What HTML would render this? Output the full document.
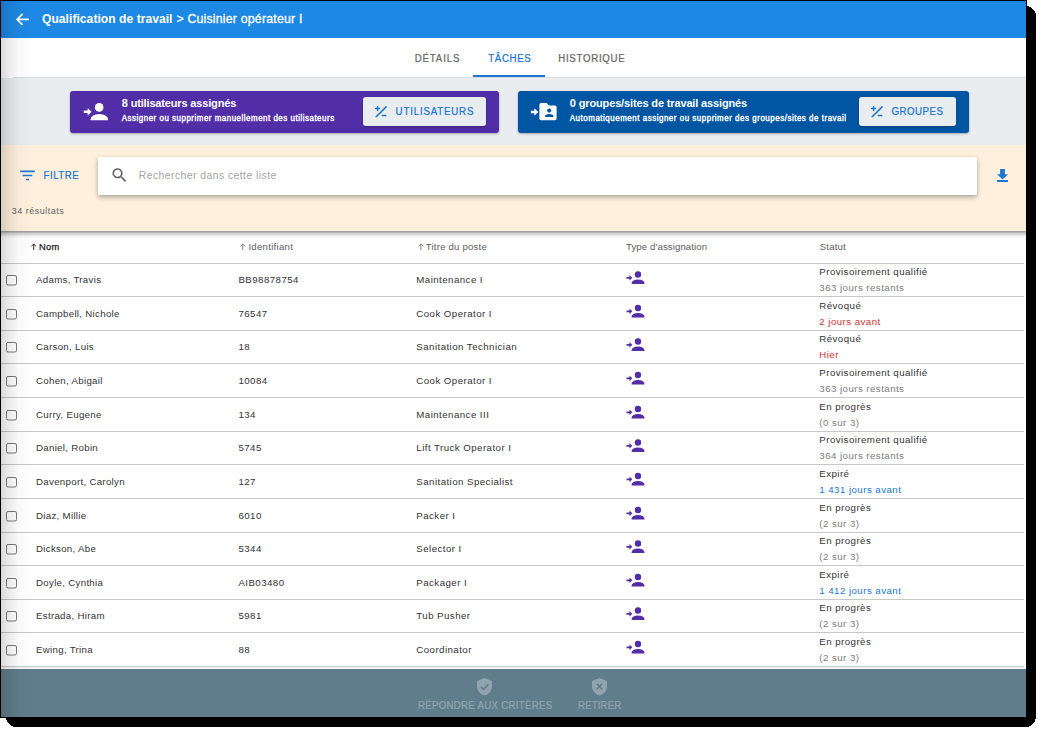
<!DOCTYPE html>
<html><head><meta charset="utf-8">
<style>
*{margin:0;padding:0}
html,body{width:1042px;height:733px;overflow:hidden;background:#fff}
svg{display:block;font-family:"Liberation Sans",sans-serif}
</style></head><body>
<svg width="1042" height="733" viewBox="0 0 1042 733">
<defs>
<clipPath id="win"><rect x="1" y="1" width="1025" height="716"/></clipPath>
<linearGradient id="lshadow" x1="0" x2="1" y1="0" y2="0">
 <stop offset="0" stop-color="#000" stop-opacity="0.15"/>
 <stop offset="0.25" stop-color="#000" stop-opacity="0.08"/>
 <stop offset="0.55" stop-color="#000" stop-opacity="0.025"/>
 <stop offset="1" stop-color="#000" stop-opacity="0"/>
</linearGradient>
<linearGradient id="bshadow" x1="0" x2="0" y1="0" y2="1">
 <stop offset="0" stop-color="#000" stop-opacity="0.42"/>
 <stop offset="0.3" stop-color="#000" stop-opacity="0.2"/>
 <stop offset="0.65" stop-color="#000" stop-opacity="0.05"/>
 <stop offset="1" stop-color="#000" stop-opacity="0"/>
</linearGradient>
<filter id="elev" x="-10%" y="-30%" width="120%" height="170%">
 <feDropShadow dx="0" dy="1" stdDeviation="0.8" flood-color="#000" flood-opacity="0.3"/>
</filter>
<filter id="elev2" x="-10%" y="-30%" width="120%" height="170%">
 <feDropShadow dx="0" dy="2" stdDeviation="2.6" flood-color="#000" flood-opacity="0.34"/>
</filter>
</defs>
<rect x="6" y="6" width="1030" height="721" rx="10" fill="#000" shape-rendering="crispEdges"/>
<rect x="0" y="0" width="1027" height="718" fill="#000"/>
<g clip-path="url(#win)">
<rect x="1" y="1" width="1025" height="37" fill="#1e88e5"/>
<rect x="1" y="38" width="1025" height="39" fill="#fff"/>
<rect x="1" y="77" width="12" height="1" fill="#fff"/><rect x="13" y="77" width="1013" height="1" fill="#dcdcdc"/>
<rect x="1" y="78" width="1025" height="67" fill="#e9edf0"/>
<rect x="1" y="145" width="1025" height="86" fill="#fef0dd"/>
<rect x="1" y="231" width="1025" height="437" fill="#fff"/>
<rect x="1" y="231" width="1025" height="8" fill="url(#bshadow)"/>
<rect x="1" y="669" width="1025" height="48" fill="#607d8b"/>
<rect x="1" y="667" width="1025" height="2" fill="#f5f4f2"/>
<path d="M28.8 19.4H17.2M22.6 13.9L17.1 19.4L22.6 24.9" stroke="#fff" stroke-width="1.6" fill="none"/>
<g transform="translate(42,23) scale(0.93,1)">
<text x="0" y="0" font-size="13" fill="#fff" font-weight="bold" textLength="140.32" lengthAdjust="spacing" >Qualification de travail</text>
</g>
<g transform="translate(176.4,23) scale(0.95,1)">
<text x="0" y="0" font-size="13" fill="#fff" textLength="132.63" lengthAdjust="spacing" stroke="#fff" stroke-width="0.3" >&gt; Cuisinier opérateur I</text>
</g>
<g transform="translate(414.7,61.8) scale(0.88,1)">
<text x="0" y="0" font-size="11" fill="#666" textLength="50.8" lengthAdjust="spacing" stroke="#666" stroke-width="0.25" >DÉTAILS</text>
</g>
<g transform="translate(488.3,61.8) scale(0.88,1)">
<text x="0" y="0" font-size="11" fill="#1976d2" textLength="48.18" lengthAdjust="spacing" stroke="#1976d2" stroke-width="0.25" >TÂCHES</text>
</g>
<g transform="translate(558.2,61.8) scale(0.88,1)">
<text x="0" y="0" font-size="11" fill="#666" textLength="75.68" lengthAdjust="spacing" stroke="#666" stroke-width="0.25" >HISTORIQUE</text>
</g>
<rect x="473" y="75" width="72" height="2" fill="#1976d2"/>
<rect x="70" y="91" width="429" height="42" rx="3" fill="#512da8" filter="url(#elev)"/>
<g transform="translate(83.7,103) scale(1)" fill="#fff"><circle cx="15.5" cy="4.4" r="4.3"/><path d="M6.9 17.2V16.2A8.7 5.2 0 0 1 24.3 16.2V17.2z"/><path d="M0 7.55h4V4.9l3.8 3.9-3.8 3.9V10.05H0z"/></g>
<text x="121.8" y="106.5" font-size="11" fill="#fff" font-weight="bold" textLength="114.5" lengthAdjust="spacing" >8 utilisateurs assignés</text>
<g transform="translate(121.8,121) scale(0.88,1)">
<text x="0" y="0" font-size="9" fill="#fff" textLength="241.25" lengthAdjust="spacing" stroke="#fff" stroke-width="0.4" >Assigner ou supprimer manuellement des utilisateurs</text>
</g>
<rect x="363" y="97" width="123" height="29" rx="3" fill="#e9edf0" filter="url(#elev)"/>
<g transform="translate(372.5,105.6)" stroke="#1976d2" stroke-width="1.5" stroke-linecap="round" fill="none"><path d="M3.2 3h3.8M5.1 1.2v3.6M3.7 11.1L13.6 1.3M9.9 9.9h3.3"/></g>
<g transform="translate(395.6,114.9) scale(0.88,1)">
<text x="0" y="0" font-size="11" fill="#1976d2" textLength="88.41" lengthAdjust="spacing" stroke="#1976d2" stroke-width="0.25" >UTILISATEURS</text>
</g>
<rect x="518" y="91" width="451" height="42" rx="3" fill="#0156a2" filter="url(#elev)"/>
<g fill="#fff"><path d="M530.9 110.8h3.4v-2.5l4 3.7-4 3.7v-2.5h-3.4z"/><path d="M541 103.1h5.8l2 2.3h6.2a1.6 1.6 0 0 1 1.6 1.6v11.6a1.6 1.6 0 0 1-1.6 1.6h-14a1.6 1.6 0 0 1-1.6-1.6v-13.9a1.6 1.6 0 0 1 1.6-1.6z"/></g>
<circle cx="549.2" cy="110.6" r="2.1" fill="#0156a2"/>
<path d="M545 117v-1c0-1.2 2-2 4.2-2s4.2.8 4.2 2v1z" fill="#0156a2"/>
<text x="569.8" y="106.5" font-size="11" fill="#fff" font-weight="bold" textLength="177.4" lengthAdjust="spacing" >0 groupes/sites de travail assignés</text>
<g transform="translate(569.8,121) scale(0.88,1)">
<text x="0" y="0" font-size="9" fill="#fff" textLength="313.98" lengthAdjust="spacing" stroke="#fff" stroke-width="0.4" >Automatiquement assigner ou supprimer des groupes/sites de travail</text>
</g>
<rect x="859" y="97" width="97" height="29" rx="3" fill="#e9edf0" filter="url(#elev)"/>
<g transform="translate(868.5,105.6)" stroke="#1976d2" stroke-width="1.5" stroke-linecap="round" fill="none"><path d="M3.2 3h3.8M5.1 1.2v3.6M3.7 11.1L13.6 1.3M9.9 9.9h3.3"/></g>
<g transform="translate(891.4,114.9) scale(0.88,1)">
<text x="0" y="0" font-size="11" fill="#1976d2" textLength="58.52" lengthAdjust="spacing" stroke="#1976d2" stroke-width="0.25" >GROUPES</text>
</g>
<g transform="translate(17.77,165.73) scale(0.81)" fill="#1976d2"><path d="M10 18h4v-2h-4v2zM3 6v2h18V6H3zm3 7h12v-2H6v2z"/></g>
<g transform="translate(43.5,178.8) scale(0.88,1)">
<text x="0" y="0" font-size="11" fill="#1976d2" textLength="40.11" lengthAdjust="spacing" stroke="#1976d2" stroke-width="0.25" >FILTRE</text>
</g>
<rect x="98" y="157" width="879" height="38" rx="2" fill="#fff" filter="url(#elev2)"/>
<g transform="translate(110.1,165.8) scale(0.785)" fill="#666"><path d="M15.5 14h-.79l-.28-.27C15.41 12.59 16 11.11 16 9.5 16 5.91 13.09 3 9.5 3S3 5.91 3 9.5 5.91 16 9.5 16c1.61 0 3.09-.59 4.23-1.57l.27.28v.79l5 4.99L20.49 19l-4.99-5zm-6 0C7.01 14 5 11.99 5 9.5S7.01 5 9.5 5 14 7.01 14 9.5 11.99 14 9.5 14z"/></g>
<g transform="translate(138.8,178.8) scale(0.9,1)">
<text x="0" y="0" font-size="11.5" fill="#a3a3a3" textLength="152.78" lengthAdjust="spacing" >Rechercher dans cette liste</text>
</g>
<path d="M1000.1 169h4.8v5.2h3.1l-5.45 5.4-5.45-5.4h3z M997.1 180.1h10.9v1.9h-10.9z" fill="#1976d2"/>
<text x="11.7" y="213.7" font-size="9" fill="#666" textLength="52" lengthAdjust="spacing" >34 résultats</text>
<text x="39" y="249.8" font-size="9.3" fill="#222" textLength="20.3" lengthAdjust="spacing" stroke="#222" stroke-width="0.25" >Nom</text>
<path d="M33.7 250V244M31.3 246.4L33.7 244L36.1 246.4" stroke="#222" stroke-width="0.95" fill="none"/>
<path d="M242.79999999999998 250V244M240.4 246.4L242.79999999999998 244L245.2 246.4" stroke="#777" stroke-width="0.95" fill="none"/>
<text x="248.4" y="249.8" font-size="9.6" fill="#5c5c5c" textLength="44.5" lengthAdjust="spacing" >Identifiant</text>
<path d="M420.9 250V244M418.5 246.4L420.9 244L423.3 246.4" stroke="#777" stroke-width="0.95" fill="none"/>
<text x="425.8" y="249.8" font-size="9.6" fill="#5c5c5c" textLength="61" lengthAdjust="spacing" >Titre du poste</text>
<text x="626" y="249.8" font-size="9.6" fill="#5c5c5c" textLength="81.1" lengthAdjust="spacing" >Type d&#x27;assignation</text>
<text x="819.8" y="249.8" font-size="9.6" fill="#5c5c5c" textLength="25.9" lengthAdjust="spacing" >Statut</text>
<rect x="1" y="263" width="1023" height="1" fill="#c8c8c8"/>
<rect x="1" y="296" width="1023" height="1" fill="#c8c8c8"/>
<rect x="1" y="330" width="1023" height="1" fill="#c8c8c8"/>
<rect x="1" y="363" width="1023" height="1" fill="#c8c8c8"/>
<rect x="1" y="397" width="1023" height="1" fill="#c8c8c8"/>
<rect x="1" y="431" width="1023" height="1" fill="#c8c8c8"/>
<rect x="1" y="464" width="1023" height="1" fill="#c8c8c8"/>
<rect x="1" y="498" width="1023" height="1" fill="#c8c8c8"/>
<rect x="1" y="532" width="1023" height="1" fill="#c8c8c8"/>
<rect x="1" y="565" width="1023" height="1" fill="#c8c8c8"/>
<rect x="1" y="599" width="1023" height="1" fill="#c8c8c8"/>
<rect x="1" y="632" width="1023" height="1" fill="#c8c8c8"/>
<rect x="1" y="666" width="1023" height="1" fill="#c8c8c8"/>
<rect x="6.5" y="275.5" width="10" height="9.5" rx="1.5" fill="none" stroke="#7a7a7a" stroke-width="1"/>
<text x="36" y="283.1" font-size="9.7" fill="#333" style="letter-spacing:0.3px;" >Adams, Travis</text>
<text x="238.4" y="283.1" font-size="9.7" fill="#333" style="letter-spacing:0.45px;" >BB98878754</text>
<text x="416.3" y="283.1" font-size="9.7" fill="#333" style="letter-spacing:0.45px;" >Maintenance I</text>
<g transform="translate(626.5,271.3) scale(0.74)" fill="#512da8"><circle cx="15.5" cy="4.4" r="4.3"/><path d="M6.9 17.2V16.2A8.7 5.2 0 0 1 24.3 16.2V17.2z"/><path d="M0 7.55h4V4.9l3.8 3.9-3.8 3.9V10.05H0z"/></g>
<text x="819.3" y="275.0" font-size="9.7" fill="#333" style="letter-spacing:0.45px;" >Provisoirement qualifié</text>
<text x="819.3" y="291.1" font-size="9.7" fill="#7c7c7c" style="letter-spacing:0.45px;" >363 jours restants</text>
<rect x="6.5" y="309.5" width="10" height="9.5" rx="1.5" fill="none" stroke="#7a7a7a" stroke-width="1"/>
<text x="36" y="316.6" font-size="9.7" fill="#333" style="letter-spacing:0.3px;" >Campbell, Nichole</text>
<text x="238.4" y="316.6" font-size="9.7" fill="#333" style="letter-spacing:0.45px;" >76547</text>
<text x="416.3" y="316.6" font-size="9.7" fill="#333" style="letter-spacing:0.45px;" >Cook Operator I</text>
<g transform="translate(626.5,304.8) scale(0.74)" fill="#512da8"><circle cx="15.5" cy="4.4" r="4.3"/><path d="M6.9 17.2V16.2A8.7 5.2 0 0 1 24.3 16.2V17.2z"/><path d="M0 7.55h4V4.9l3.8 3.9-3.8 3.9V10.05H0z"/></g>
<text x="819.3" y="308.5" font-size="9.7" fill="#333" style="letter-spacing:0.45px;" >Révoqué</text>
<text x="819.3" y="324.6" font-size="9.7" fill="#d32f2f" style="letter-spacing:0.45px;" >2 jours avant</text>
<rect x="6.5" y="342.5" width="10" height="9.5" rx="1.5" fill="none" stroke="#7a7a7a" stroke-width="1"/>
<text x="36" y="350.1" font-size="9.7" fill="#333" style="letter-spacing:0.3px;" >Carson, Luis</text>
<text x="238.4" y="350.1" font-size="9.7" fill="#333" style="letter-spacing:0.45px;" >18</text>
<text x="416.3" y="350.1" font-size="9.7" fill="#333" style="letter-spacing:0.45px;" >Sanitation Technician</text>
<g transform="translate(626.5,338.3) scale(0.74)" fill="#512da8"><circle cx="15.5" cy="4.4" r="4.3"/><path d="M6.9 17.2V16.2A8.7 5.2 0 0 1 24.3 16.2V17.2z"/><path d="M0 7.55h4V4.9l3.8 3.9-3.8 3.9V10.05H0z"/></g>
<text x="819.3" y="342.0" font-size="9.7" fill="#333" style="letter-spacing:0.45px;" >Révoqué</text>
<text x="819.3" y="358.1" font-size="9.7" fill="#d32f2f" style="letter-spacing:0.45px;" >Hier</text>
<rect x="6.5" y="376.5" width="10" height="9.5" rx="1.5" fill="none" stroke="#7a7a7a" stroke-width="1"/>
<text x="36" y="383.6" font-size="9.7" fill="#333" style="letter-spacing:0.3px;" >Cohen, Abigail</text>
<text x="238.4" y="383.6" font-size="9.7" fill="#333" style="letter-spacing:0.45px;" >10084</text>
<text x="416.3" y="383.6" font-size="9.7" fill="#333" style="letter-spacing:0.45px;" >Cook Operator I</text>
<g transform="translate(626.5,371.8) scale(0.74)" fill="#512da8"><circle cx="15.5" cy="4.4" r="4.3"/><path d="M6.9 17.2V16.2A8.7 5.2 0 0 1 24.3 16.2V17.2z"/><path d="M0 7.55h4V4.9l3.8 3.9-3.8 3.9V10.05H0z"/></g>
<text x="819.3" y="375.5" font-size="9.7" fill="#333" style="letter-spacing:0.45px;" >Provisoirement qualifié</text>
<text x="819.3" y="391.6" font-size="9.7" fill="#7c7c7c" style="letter-spacing:0.45px;" >363 jours restants</text>
<rect x="6.5" y="410.5" width="10" height="9.5" rx="1.5" fill="none" stroke="#7a7a7a" stroke-width="1"/>
<text x="36" y="417.6" font-size="9.7" fill="#333" style="letter-spacing:0.3px;" >Curry, Eugene</text>
<text x="238.4" y="417.6" font-size="9.7" fill="#333" style="letter-spacing:0.45px;" >134</text>
<text x="416.3" y="417.6" font-size="9.7" fill="#333" style="letter-spacing:0.45px;" >Maintenance III</text>
<g transform="translate(626.5,405.8) scale(0.74)" fill="#512da8"><circle cx="15.5" cy="4.4" r="4.3"/><path d="M6.9 17.2V16.2A8.7 5.2 0 0 1 24.3 16.2V17.2z"/><path d="M0 7.55h4V4.9l3.8 3.9-3.8 3.9V10.05H0z"/></g>
<text x="819.3" y="409.5" font-size="9.7" fill="#333" style="letter-spacing:0.45px;" >En progrès</text>
<text x="819.3" y="425.6" font-size="9.7" fill="#7c7c7c" style="letter-spacing:0.45px;" >(0 sur 3)</text>
<rect x="6.5" y="443.5" width="10" height="9.5" rx="1.5" fill="none" stroke="#7a7a7a" stroke-width="1"/>
<text x="36" y="451.1" font-size="9.7" fill="#333" style="letter-spacing:0.3px;" >Daniel, Robin</text>
<text x="238.4" y="451.1" font-size="9.7" fill="#333" style="letter-spacing:0.45px;" >5745</text>
<text x="416.3" y="451.1" font-size="9.7" fill="#333" style="letter-spacing:0.45px;" >Lift Truck Operator I</text>
<g transform="translate(626.5,439.3) scale(0.74)" fill="#512da8"><circle cx="15.5" cy="4.4" r="4.3"/><path d="M6.9 17.2V16.2A8.7 5.2 0 0 1 24.3 16.2V17.2z"/><path d="M0 7.55h4V4.9l3.8 3.9-3.8 3.9V10.05H0z"/></g>
<text x="819.3" y="443.0" font-size="9.7" fill="#333" style="letter-spacing:0.45px;" >Provisoirement qualifié</text>
<text x="819.3" y="459.1" font-size="9.7" fill="#7c7c7c" style="letter-spacing:0.45px;" >364 jours restants</text>
<rect x="6.5" y="477.5" width="10" height="9.5" rx="1.5" fill="none" stroke="#7a7a7a" stroke-width="1"/>
<text x="36" y="484.6" font-size="9.7" fill="#333" style="letter-spacing:0.3px;" >Davenport, Carolyn</text>
<text x="238.4" y="484.6" font-size="9.7" fill="#333" style="letter-spacing:0.45px;" >127</text>
<text x="416.3" y="484.6" font-size="9.7" fill="#333" style="letter-spacing:0.45px;" >Sanitation Specialist</text>
<g transform="translate(626.5,472.8) scale(0.74)" fill="#512da8"><circle cx="15.5" cy="4.4" r="4.3"/><path d="M6.9 17.2V16.2A8.7 5.2 0 0 1 24.3 16.2V17.2z"/><path d="M0 7.55h4V4.9l3.8 3.9-3.8 3.9V10.05H0z"/></g>
<text x="819.3" y="476.5" font-size="9.7" fill="#333" style="letter-spacing:0.45px;" >Expiré</text>
<text x="819.3" y="492.6" font-size="9.7" fill="#1976d2" style="letter-spacing:0.45px;" >1 431 jours avant</text>
<rect x="6.5" y="511.5" width="10" height="9.5" rx="1.5" fill="none" stroke="#7a7a7a" stroke-width="1"/>
<text x="36" y="518.6" font-size="9.7" fill="#333" style="letter-spacing:0.3px;" >Diaz, Millie</text>
<text x="238.4" y="518.6" font-size="9.7" fill="#333" style="letter-spacing:0.45px;" >6010</text>
<text x="416.3" y="518.6" font-size="9.7" fill="#333" style="letter-spacing:0.45px;" >Packer I</text>
<g transform="translate(626.5,506.8) scale(0.74)" fill="#512da8"><circle cx="15.5" cy="4.4" r="4.3"/><path d="M6.9 17.2V16.2A8.7 5.2 0 0 1 24.3 16.2V17.2z"/><path d="M0 7.55h4V4.9l3.8 3.9-3.8 3.9V10.05H0z"/></g>
<text x="819.3" y="510.5" font-size="9.7" fill="#333" style="letter-spacing:0.45px;" >En progrès</text>
<text x="819.3" y="526.6" font-size="9.7" fill="#7c7c7c" style="letter-spacing:0.45px;" >(2 sur 3)</text>
<rect x="6.5" y="544.5" width="10" height="9.5" rx="1.5" fill="none" stroke="#7a7a7a" stroke-width="1"/>
<text x="36" y="552.1" font-size="9.7" fill="#333" style="letter-spacing:0.3px;" >Dickson, Abe</text>
<text x="238.4" y="552.1" font-size="9.7" fill="#333" style="letter-spacing:0.45px;" >5344</text>
<text x="416.3" y="552.1" font-size="9.7" fill="#333" style="letter-spacing:0.45px;" >Selector I</text>
<g transform="translate(626.5,540.3) scale(0.74)" fill="#512da8"><circle cx="15.5" cy="4.4" r="4.3"/><path d="M6.9 17.2V16.2A8.7 5.2 0 0 1 24.3 16.2V17.2z"/><path d="M0 7.55h4V4.9l3.8 3.9-3.8 3.9V10.05H0z"/></g>
<text x="819.3" y="544.0" font-size="9.7" fill="#333" style="letter-spacing:0.45px;" >En progrès</text>
<text x="819.3" y="560.1" font-size="9.7" fill="#7c7c7c" style="letter-spacing:0.45px;" >(2 sur 3)</text>
<rect x="6.5" y="578.5" width="10" height="9.5" rx="1.5" fill="none" stroke="#7a7a7a" stroke-width="1"/>
<text x="36" y="585.6" font-size="9.7" fill="#333" style="letter-spacing:0.3px;" >Doyle, Cynthia</text>
<text x="238.4" y="585.6" font-size="9.7" fill="#333" style="letter-spacing:0.45px;" >AIB03480</text>
<text x="416.3" y="585.6" font-size="9.7" fill="#333" style="letter-spacing:0.45px;" >Packager I</text>
<g transform="translate(626.5,573.8) scale(0.74)" fill="#512da8"><circle cx="15.5" cy="4.4" r="4.3"/><path d="M6.9 17.2V16.2A8.7 5.2 0 0 1 24.3 16.2V17.2z"/><path d="M0 7.55h4V4.9l3.8 3.9-3.8 3.9V10.05H0z"/></g>
<text x="819.3" y="577.5" font-size="9.7" fill="#333" style="letter-spacing:0.45px;" >Expiré</text>
<text x="819.3" y="593.6" font-size="9.7" fill="#1976d2" style="letter-spacing:0.45px;" >1 412 jours avant</text>
<rect x="6.5" y="611.5" width="10" height="9.5" rx="1.5" fill="none" stroke="#7a7a7a" stroke-width="1"/>
<text x="36" y="619.1" font-size="9.7" fill="#333" style="letter-spacing:0.3px;" >Estrada, Hiram</text>
<text x="238.4" y="619.1" font-size="9.7" fill="#333" style="letter-spacing:0.45px;" >5981</text>
<text x="416.3" y="619.1" font-size="9.7" fill="#333" style="letter-spacing:0.45px;" >Tub Pusher</text>
<g transform="translate(626.5,607.3) scale(0.74)" fill="#512da8"><circle cx="15.5" cy="4.4" r="4.3"/><path d="M6.9 17.2V16.2A8.7 5.2 0 0 1 24.3 16.2V17.2z"/><path d="M0 7.55h4V4.9l3.8 3.9-3.8 3.9V10.05H0z"/></g>
<text x="819.3" y="611.0" font-size="9.7" fill="#333" style="letter-spacing:0.45px;" >En progrès</text>
<text x="819.3" y="627.1" font-size="9.7" fill="#7c7c7c" style="letter-spacing:0.45px;" >(2 sur 3)</text>
<rect x="6.5" y="645.5" width="10" height="9.5" rx="1.5" fill="none" stroke="#7a7a7a" stroke-width="1"/>
<text x="36" y="652.6" font-size="9.7" fill="#333" style="letter-spacing:0.3px;" >Ewing, Trina</text>
<text x="238.4" y="652.6" font-size="9.7" fill="#333" style="letter-spacing:0.45px;" >88</text>
<text x="416.3" y="652.6" font-size="9.7" fill="#333" style="letter-spacing:0.45px;" >Coordinator</text>
<g transform="translate(626.5,640.8) scale(0.74)" fill="#512da8"><circle cx="15.5" cy="4.4" r="4.3"/><path d="M6.9 17.2V16.2A8.7 5.2 0 0 1 24.3 16.2V17.2z"/><path d="M0 7.55h4V4.9l3.8 3.9-3.8 3.9V10.05H0z"/></g>
<text x="819.3" y="644.5" font-size="9.7" fill="#333" style="letter-spacing:0.45px;" >En progrès</text>
<text x="819.3" y="660.6" font-size="9.7" fill="#7c7c7c" style="letter-spacing:0.45px;" >(2 sur 3)</text>
<g transform="translate(477,677.9)"><path d="M7.5 0L0 3v5c0 4.6 3.2 8.6 7.5 9.6 4.3-1 7.5-5 7.5-9.6V3z" fill="#90a4ae"/><path d="M3.8 8.9l2.6 2.6 5-5" stroke="#607d8b" stroke-width="1.5" fill="none"/></g>
<g transform="translate(417.9,708.8) scale(0.88,1)">
<text x="0" y="0" font-size="11" fill="#90a4ae" textLength="152.61" lengthAdjust="spacing" stroke="#90a4ae" stroke-width="0.25" >RÉPONDRE AUX CRITÈRES</text>
</g>
<g transform="translate(592,677.9)"><path d="M7.5 0L0 3v5c0 4.6 3.2 8.6 7.5 9.6 4.3-1 7.5-5 7.5-9.6V3z" fill="#90a4ae"/><path d="M4.8 6l5.4 5.4M10.2 6l-5.4 5.4" stroke="#607d8b" stroke-width="1.5" fill="none"/></g>
<g transform="translate(578.1,708.8) scale(0.88,1)">
<text x="0" y="0" font-size="11" fill="#90a4ae" textLength="48.98" lengthAdjust="spacing" stroke="#90a4ae" stroke-width="0.25" >RETIRER</text>
</g>
<rect x="1" y="1" width="32" height="716" fill="url(#lshadow)"/>
</g>
</svg>
</body></html>
